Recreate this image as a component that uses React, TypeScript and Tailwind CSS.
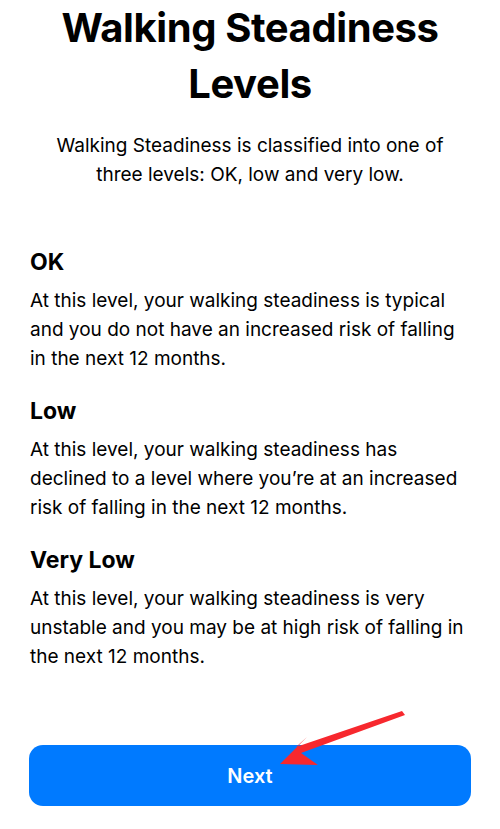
const levels = [
  {
    name: "OK",
    text: "At this level, your walking steadiness is typical and you do not have an increased risk of falling in the next 12 months.",
  },
  {
    name: "Low",
    text: "At this level, your walking steadiness has declined to a level where you’re at an increased risk of falling in the next 12 months.",
  },
  {
    name: "Very Low",
    text: "At this level, your walking steadiness is very unstable and you may be at high risk of falling in the next 12 months.",
  },
]

const App = () => {
  return (
    <div className="relative w-[500px] h-[829px] bg-white text-black font-['Inter',sans-serif] flex flex-col overflow-hidden">
      <h1 className="text-[40px] leading-[56px] font-bold text-center tracking-[-0.4px]">
        Walking Steadiness
        <br />
        Levels
      </h1>
      <p className="mt-[19px] text-[19px] leading-[29px] text-center px-[50px]">
        Walking Steadiness is classified into one of three levels: OK, low and very low.
      </p>

      <div className="mt-[57px] px-[30px] flex flex-col gap-[22px]">
        {levels.map((level) => (
          <section key={level.name}>
            <h2 className="text-[23px] leading-[32px] font-bold">{level.name}</h2>
            <p className="mt-[8px] text-[19px] leading-[29px]">{level.text}</p>
          </section>
        ))}
      </div>

      <button className="absolute left-[29px] right-[29px] top-[745px] h-[61px] rounded-[14px] bg-[#007AFF] text-white text-[20px] font-semibold">
        Next
      </button>

      {/* red pointer arrow */}
      <svg className="absolute inset-0 pointer-events-none" width="500" height="829" viewBox="0 0 500 829">
        <path d="M402 711 L405 715 L301 753 L318 765 L280 764 L307 737 L296 747 Z" fill="#F7282E" />
      </svg>
    </div>
  )
}

export default App
